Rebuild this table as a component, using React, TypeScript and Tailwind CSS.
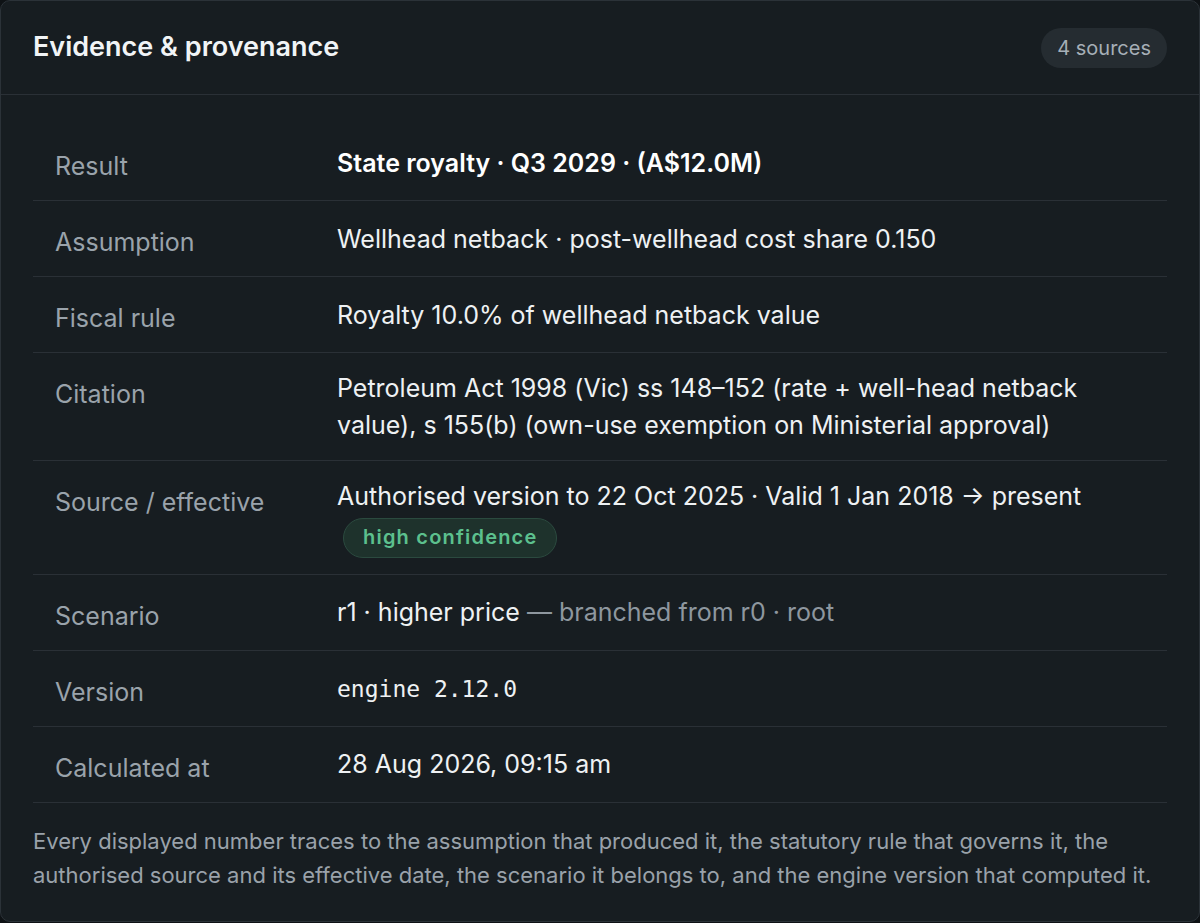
import React from "react";

const rows: { label: string; value: React.ReactNode; extra?: React.ReactNode }[] = [
  {
    label: "Result",
    value: <span className="font-semibold text-white">State royalty · Q3 2029 · (A$12.0M)</span>,
  },
  { label: "Assumption", value: "Wellhead netback · post-wellhead cost share 0.150" },
  { label: "Fiscal rule", value: "Royalty 10.0% of wellhead netback value" },
  {
    label: "Citation",
    value:
      "Petroleum Act 1998 (Vic) ss 148–152 (rate + well-head netback value), s 155(b) (own-use exemption on Ministerial approval)",
  },
  {
    label: "Source / effective",
    value: "Authorised version to 22 Oct 2025 · Valid 1 Jan 2018 → present",
    extra: (
      <div className="mt-[2px] ml-[6px]">
        <span className="inline-flex h-[40px] items-center rounded-full border border-[#2b4a3f] bg-[#1e322c] px-[19px] text-[20px] font-semibold tracking-[0.06em] text-[#5cc08e]">
          high confidence
        </span>
      </div>
    ),
  },
  {
    label: "Scenario",
    value: (
      <>
        r1 · higher price <span className="text-[#8e979f]">— branched from r0 · root</span>
      </>
    ),
  },
  {
    label: "Version",
    value: <span className="font-['DejaVu_Sans_Mono',monospace] text-[23px]">engine 2.12.0</span>,
  },
  { label: "Calculated at", value: "28 Aug 2026, 09:15 am" },
];

export default function App() {
  return (
    <div className="min-h-screen bg-[#0e1215] font-['Inter',sans-serif]">
      <div className="rounded-[10px] border border-[#2b3238] bg-[#171d21]">
        <div className="flex h-[94px] items-center justify-between border-b border-[#2a3036] px-[32px]">
          <h2 className="text-[27px] font-semibold text-[#f1f4f6]">Evidence &amp; provenance</h2>
          <span className="inline-flex h-[40px] items-center rounded-full bg-[#252c31] px-[16px] text-[20px] text-[#a6afb7]">
            4 sources
          </span>
        </div>

        <div className="px-[32px] pt-[30px]">
          {rows.map((r) => (
            <div key={r.label} className="grid grid-cols-[304px_1fr] border-b border-[#2a3036]">
              <div className="self-start pl-[22px] pt-[23px] pb-[15px] text-[25px] leading-[37px] text-[#9aa3ab]">
                {r.label}
              </div>
              <div className="self-center pt-[17px] pb-[16px] pr-[20px] text-[25px] leading-[37px] text-[#eef1f3]">
                <div>{r.value}</div>
                {r.extra}
              </div>
            </div>
          ))}
        </div>

        <p className="px-[32px] pt-[21px] pb-[29px] text-[22px] leading-[34px] text-[#9aa2aa]">
          Every displayed number traces to the assumption that produced it, the statutory rule that governs it, the
          authorised source and its effective date, the scenario it belongs to, and the engine version that computed it.
        </p>
      </div>
    </div>
  );
}
